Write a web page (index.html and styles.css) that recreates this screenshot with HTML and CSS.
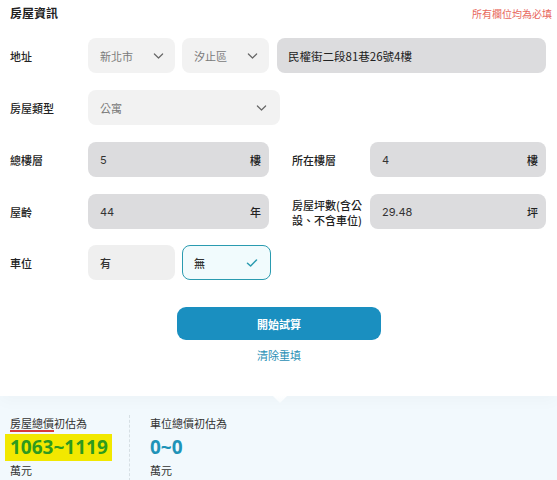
FILE: index.html
```html
<!DOCTYPE html>
<html lang="zh-Hant">
<head>
<meta charset="utf-8">
<link rel="stylesheet" href="styles.css">
</head>
<body>
<div class="card">
  <div class="head">
    <h1 class="title">房屋資訊</h1>
    <span class="note">所有欄位均為必填</span>
  </div>

  <div class="row">
    <div class="label">地址</div>
    <div class="fields addr">
      <div class="select small"><span>新北市</span><svg class="chev" viewBox="0 0 12 8"><path d="M1.5 1.8 6 6.2 10.5 1.8" fill="none" stroke="#666" stroke-width="1.3" stroke-linecap="round" stroke-linejoin="round"/></svg></div>
      <div class="select small"><span>汐止區</span><svg class="chev" viewBox="0 0 12 8"><path d="M1.5 1.8 6 6.2 10.5 1.8" fill="none" stroke="#666" stroke-width="1.3" stroke-linecap="round" stroke-linejoin="round"/></svg></div>
      <div class="input dark wide"><span>民權街二段81巷26號4樓</span></div>
    </div>
  </div>

  <div class="row">
    <div class="label">房屋類型</div>
    <div class="select type"><span>公寓</span><svg class="chev" viewBox="0 0 12 8"><path d="M1.5 1.8 6 6.2 10.5 1.8" fill="none" stroke="#666" stroke-width="1.3" stroke-linecap="round" stroke-linejoin="round"/></svg></div>
  </div>

  <div class="row two">
    <div class="half">
      <div class="label">總樓層</div>
      <div class="input dark num left"><span>5</span><b class="unit">樓</b></div>
    </div>
    <div class="half">
      <div class="label">所在樓層</div>
      <div class="input dark num right"><span>4</span><b class="unit">樓</b></div>
    </div>
  </div>

  <div class="row two">
    <div class="half">
      <div class="label">屋齡</div>
      <div class="input dark num left"><span>44</span><b class="unit">年</b></div>
    </div>
    <div class="half">
      <div class="label multi">房屋坪數(含公設、不含車位)</div>
      <div class="input dark num right"><span>29.48</span><b class="unit">坪</b></div>
    </div>
  </div>

  <div class="row last">
    <div class="label">車位</div>
    <div class="fields">
      <div class="choice">有</div>
      <div class="choice on">無<svg class="check" viewBox="0 0 12 10"><path d="M1.5 5.2 4.6 8 10.5 2" fill="none" stroke="#2a9bb0" stroke-width="1.5" stroke-linecap="round" stroke-linejoin="round"/></svg></div>
    </div>
  </div>

  <div class="actions">
    <button class="btn">開始試算</button>
    <a class="reset">清除重填</a>
  </div>
  <div class="pointer"></div>
</div>

<div class="result">
  <div class="col first">
    <div class="rlabel"><span class="mark">房屋總價</span>初估為</div>
    <div class="price green"><span class="hl">1063~1119</span></div>
    <div class="unit2">萬元</div>
  </div>
  <div class="col">
    <div class="rlabel">車位總價初估為</div>
    <div class="price blue">0~0</div>
    <div class="unit2">萬元</div>
  </div>
</div>
</body>
</html>
```

FILE: styles.css
```css
* { box-sizing: border-box; }
html, body { margin: 0; padding: 0; }
body {
  width: 557px;
  height: 480px;
  overflow: hidden;
  background: #f2f9fd;
  font-family: "Noto Sans CJK TC", "Noto Sans", sans-serif;
  color: #333;
}
.card {
  position: relative;
  background: #fff;
  padding: 0 11px 0 10px;
  height: 396px;
  box-shadow: 0 6px 14px rgba(0, 0, 0, 0.025);
}
.head {
  display: flex;
  justify-content: space-between;
  align-items: flex-end;
  height: 21px;
  padding-top: 4px;
}
.title {
  margin: 0;
  font-size: 12px;
  font-weight: 700;
  line-height: 16px;
  color: #222;
}
.note {
  font-size: 10px;
  color: #e8675c;
  line-height: 14px;
  margin-right: -6px;
}
.row {
  display: flex;
  align-items: center;
  height: 35px;
  margin-top: 17px;
}
.row.last { margin-top: 16px; }
.label {
  width: 78px;
  flex: none;
  font-size: 11px;
  font-weight: 500;
  color: #222;
}
.label.multi {
  line-height: 15px;
  padding-right: 4px;
  margin-top: 2px;
}
.fields {
  display: flex;
  gap: 7px;
  height: 100%;
}
.fields.addr { flex: 1; }
.select, .input, .choice {
  height: 35px;
  border-radius: 8px;
  display: flex;
  align-items: center;
  justify-content: space-between;
  font-size: 11px;
  padding: 0 12px;
}
.select {
  background: #f2f2f2;
  color: #7a7a7a;
}
.select.small { width: 87px; padding-right: 11px; }
.select.type { width: 192px; padding-right: 13px; }
.chev { width: 11px; height: 8px; }
.input.dark {
  background: #dcdcde;
  color: #333;
}
.input.wide {
  flex: 1;
  margin-left: 1px;
  font-size: 11.5px;
  padding-left: 11px;
  color: #222;
}
.two { gap: 0; }
.half { display: flex; align-items: center; }
.half:first-child { width: 282px; }
.num { font-family: "Inter", "Noto Sans CJK TC", sans-serif; font-size: 11px; }
.num.left { width: 181px; }
.num.right { width: 176px; }
.unit {
  font-family: "Noto Sans CJK TC", sans-serif;
  font-weight: 500;
  font-size: 11px;
  color: #222;
  margin-right: -4px;
}
.choice {
  width: 87px;
  background: #efefef;
  color: #333;
  font-weight: 500;
}
.choice.on {
  width: 89px;
  background: #f1fbfd;
  border: 1px solid #2a9bb0;
  padding-left: 11px;
}
.check { width: 12px; height: 10px; }
.actions {
  display: flex;
  flex-direction: column;
  align-items: center;
  margin-top: 27px;
}
.btn {
  width: 204px;
  height: 33px;
  border: none;
  border-radius: 9px;
  background: #1a8fc0;
  color: #fff;
  font-family: "Noto Sans CJK TC", sans-serif;
  font-size: 11px;
  font-weight: 700;
  margin-left: 2px;
}
.reset {
  margin-top: 7px;
  font-size: 11px;
  color: #2b8fb5;
  line-height: 16px;
  margin-left: 2px;
}
.pointer {
  position: absolute;
  left: 272px;
  bottom: -7px;
  width: 16px;
  height: 8px;
  background: linear-gradient(to bottom, #fff 0%, #f8fcfe 100%);
  clip-path: polygon(0 0, 100% 0, 50% 100%);
}
.result {
  display: flex;
  padding: 19px 0 0 10px;
}
.col { width: 140px; }
.col.first {
  width: 120px;
  margin-right: 20px;
  border-right: 1px dashed #d6dfe4;
  height: 66px;
}
.rlabel {
  font-size: 11px;
  line-height: 16px;
  color: #333;
}
.mark {
  text-decoration: underline;
  text-decoration-color: #d53a3a;
  text-decoration-thickness: 1.5px;
  text-underline-offset: 2px;
}
.price {
  font-family: "Noto Sans", "Inter", sans-serif;
  font-weight: 700;
  font-size: 19px;
  line-height: 27px;
  margin-top: 3px;
}
.price.green { margin-left: -5px; }
.hl {
  background: #f2e800;
  padding: 0 4px 0 5px;
  display: inline-block;
  color: #2e9a1e;
}
.price.blue { color: #1f93b8; }
.unit2 {
  font-size: 11px;
  line-height: 16px;
  margin-top: 1px;
}
```
